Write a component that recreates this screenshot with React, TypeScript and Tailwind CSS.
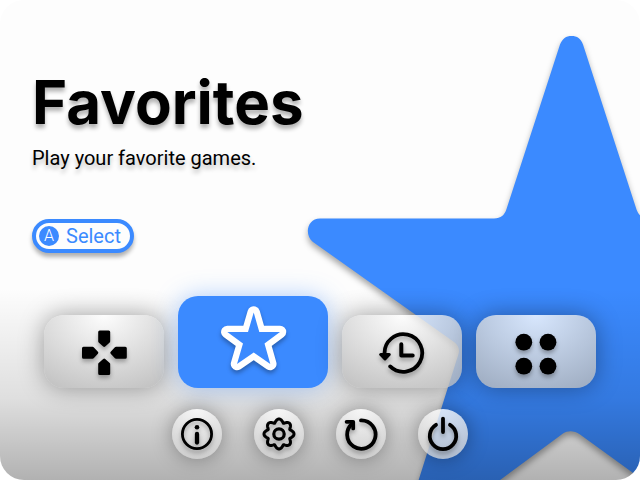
import type { ReactNode } from "react";

const iconShadow = "drop-shadow-[0_3px_2px_rgba(0,0,0,0.3)]";

function gearPath(cx: number, cy: number) {
  const steps = 160;
  const points: string[] = [];
  for (let i = 0; i < steps; i++) {
    const a = (i / steps) * Math.PI * 2;
    const r = 11.6 + 3.4 * Math.pow(Math.abs(Math.cos(4 * a)), 1.3);
    points.push(`${(cx + r * Math.cos(a)).toFixed(2)} ${(cy + r * Math.sin(a)).toFixed(2)}`);
  }
  return `M${points.join("L")}Z`;
}

function BackgroundStar() {
  return (
    <svg
      aria-hidden="true"
      viewBox="0 0 640 480"
      preserveAspectRatio="xMaxYMax slice"
      className="absolute inset-0 h-full w-full"
    >
      <path
        className="drop-shadow-[0_4px_3px_rgba(0,0,0,0.35)]"
        fill="#3b8aff"
        d="M560 44.5C562.500 38.500 566 36 571.500 36C577 36 581 38.500 583 44.500L636.500 209.500C639 216 643 218.500 649 218.500H822C836 218.500 839 233 829 242L690 343C684 347 682 352 684 358L736 520L640 478L580 434.500C574 430.500 568 430.500 563 433.500L446 520H406L458.500 354C460 349 458 345 454 342L313 242C304 235 307 218.500 320 218.500H494C501 218.500 504.500 215 506.500 209Z"
      />
    </svg>
  );
}

function DpadIcon() {
  return (
    <svg viewBox="0 0 48 48" className={`size-12 ${iconShadow}`} fill="#000" stroke="#000" strokeWidth="3" strokeLinejoin="round">
      <path d="M19.700 3.900H28.700V13.300L24.200 17.400L19.700 13.300Z" />
      <path d="M19.700 45.500H28.700V36.100L24.200 32L19.700 36.100Z" />
      <path d="M3.500 20.300V29.300H12.600L16.800 24.800L12.600 20.300Z" />
      <path d="M45.300 20.300V29.300H36L31.800 24.800L36 20.300Z" />
    </svg>
  );
}

function StarIcon() {
  return (
    <svg viewBox="0 0 72 72" className={`size-18 ${iconShadow}`}>
      <path
        d="M36.700 6.500L42.300 26H63L47.500 37.500L53.300 58L36.700 46.500L20 58L26 37.500L10.300 26H31Z"
        fill="#3b8aff"
        stroke="#fff"
        strokeWidth="12.500"
        strokeLinejoin="round"
        paintOrder="stroke"
      />
    </svg>
  );
}

function HistoryIcon() {
  return (
    <svg viewBox="0 0 48 48" className={`size-12 ${iconShadow}`} fill="none" stroke="#000" strokeWidth="3.800" strokeLinecap="round" strokeLinejoin="round">
      <path d="M6.600 26A18.800 18.800 0 1 1 12.200 38.400" />
      <path d="M2.700 26.500H11.300L7 31Z" fill="#000" strokeWidth="3" />
      <path d="M23.300 16.200V27.500H34.700" strokeWidth="4" />
    </svg>
  );
}

function AppsIcon() {
  return (
    <svg viewBox="0 0 48 48" className={`size-12 ${iconShadow}`}>
      <circle cx="11.800" cy="14.200" r="8.400" />
      <circle cx="36" cy="14.200" r="8.400" />
      <circle cx="11.800" cy="38.200" r="8.400" />
      <circle cx="36" cy="38.200" r="8.400" />
    </svg>
  );
}

function SmallIcon({ children }: { children: ReactNode }) {
  return (
    <svg
      viewBox="0 0 36 36"
      className={`size-9 ${iconShadow}`}
      fill="none"
      stroke="#000"
      strokeWidth="3.800"
      strokeLinecap="round"
      strokeLinejoin="round"
    >
      {children}
    </svg>
  );
}

function Tile({ label, children }: { label: string; children: ReactNode }) {
  return (
    <button
      type="button"
      aria-label={label}
      className="flex h-[73px] w-[120px] items-center justify-center rounded-[20px] bg-[radial-gradient(100px_84px_at_50%_0%,rgba(255,255,255,0.8),rgba(186,186,186,0.8)_100%)] shadow-[0_0_24px_rgba(0,0,0,0.35)]"
    >
      {children}
    </button>
  );
}

function RoundButton({ label, children }: { label: string; children: ReactNode }) {
  return (
    <button
      type="button"
      aria-label={label}
      className="flex size-[50px] items-center justify-center rounded-full bg-[radial-gradient(circle_at_50%_0%,rgba(255,255,255,0.8),rgba(204,204,204,0.8)_100%)] shadow-[0_0_20px_rgba(0,0,0,0.35)]"
    >
      {children}
    </button>
  );
}

export default function App() {
  return (
    <div className="min-h-screen bg-white">
      <main className="relative isolate flex min-h-screen flex-col overflow-hidden rounded-3xl bg-[#fdfdfd] font-[Roboto,sans-serif] text-black">
        <div className="absolute inset-0 -z-10">
          <BackgroundStar />
          <div className="absolute inset-0 bg-linear-to-t from-black/30 via-black/12 via-17% to-transparent to-40%" />
        </div>

        <header className="flex flex-col items-start px-8 pt-16">
          <h1 className="font-[Inter,sans-serif] text-[60px] leading-[76px] font-bold [text-shadow:0_4px_4px_rgba(0,0,0,0.3)]">
            Favorites
          </h1>
          <p className="mt-1.5 text-[20px] leading-6 [text-shadow:0_4px_4px_rgba(0,0,0,0.25)]">
            Play your favorite games.
          </p>
          <button
            type="button"
            className="mt-[49px] flex h-[34px] items-center gap-[7px] rounded-full border-4 border-[#3b8aff] bg-[#fdfdfd] pr-[9px] pl-[3px] text-[20px] leading-6 text-[#3b8aff] shadow-[0_4px_4px_rgba(0,0,0,0.3)]"
          >
            <span className="flex size-5 items-center justify-center rounded-full bg-[#3b8aff] text-[16px] leading-5 font-light text-white">
              A
            </span>
            Select
          </button>
        </header>

        <nav aria-label="Sections" className="mt-auto flex items-end justify-center gap-[14px]">
          <Tile label="Games">
            <DpadIcon />
          </Tile>
          <button
            type="button"
            aria-label="Favorites"
            aria-current="page"
            className="flex h-[92px] w-[150px] items-center justify-center rounded-[20px] bg-[#3b8aff] shadow-[0_0_24px_rgba(59,138,255,0.4)]"
          >
            <StarIcon />
          </button>
          <Tile label="Recent">
            <HistoryIcon />
          </Tile>
          <Tile label="Apps">
            <AppsIcon />
          </Tile>
        </nav>

        <nav aria-label="System" className="mt-[21px] mb-[21px] flex justify-center gap-8">
          <RoundButton label="Information">
            <SmallIcon>
              <circle cx="18" cy="18" r="14.600" strokeWidth="2.800" />
              <path d="M18 18V26.500" strokeWidth="4.300" />
              <circle cx="18" cy="11.200" r="2.300" fill="#000" stroke="none" />
            </SmallIcon>
          </RoundButton>
          <RoundButton label="Settings">
            <SmallIcon>
              <path d={gearPath(18, 18)} strokeWidth="3" />
              <circle cx="18" cy="18" r="5.200" strokeWidth="3.200" />
            </SmallIcon>
          </RoundButton>
          <RoundButton label="Restart">
            <SmallIcon>
              <path d="M18 4.400A14.200 14.200 0 1 1 9.500 7.500" />
              <path d="M3.600 5.800H10.200V12.400" />
            </SmallIcon>
          </RoundButton>
          <RoundButton label="Power">
            <SmallIcon>
              <path d="M11 8.800A13.200 13.200 0 1 0 25 8.800" />
              <path d="M18 2.600V16" />
            </SmallIcon>
          </RoundButton>
        </nav>
      </main>
    </div>
  );
}
